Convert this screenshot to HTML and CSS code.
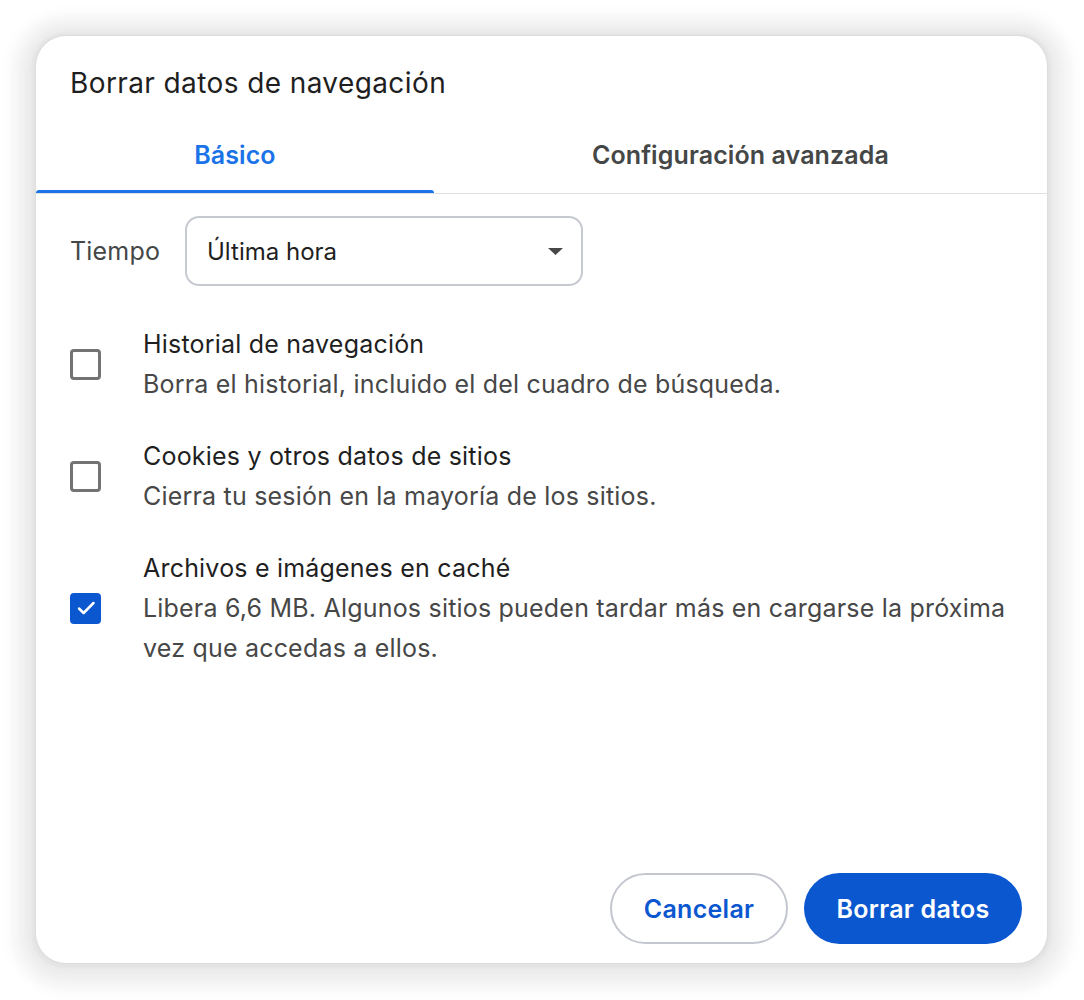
FILE: index.html
```html
<!DOCTYPE html>
<html lang="es">
<head>
<meta charset="utf-8">
<title>Borrar datos de navegación</title>
<link rel="stylesheet" href="styles.css">
</head>
<body>
<div class="dialog">
  <div class="title">Borrar datos de navegación</div>
  <div class="tabs">
    <div class="tab active"><span class="tab-label">Básico</span><span class="tab-bar"></span></div>
    <div class="tab"><span class="tab-label">Configuración avanzada</span><span class="tab-bar"></span></div>
  </div>
  <div class="content">
    <div class="time-row">
      <span class="time-label">Tiempo</span>
      <div class="select">
        <span class="select-value">Última hora</span>
        <svg class="select-arrow" width="15" height="7" viewBox="0 0 15 7"><path d="M0 0 H15 L7.5 7 Z" fill="#474747"/></svg>
      </div>
    </div>
    <div class="options">
      <div class="option">
        <span class="checkbox"></span>
        <div class="option-text">
          <div class="option-title">Historial de navegación</div>
          <div class="option-desc">Borra el historial, incluido el del cuadro de búsqueda.</div>
        </div>
      </div>
      <div class="option">
        <span class="checkbox"></span>
        <div class="option-text">
          <div class="option-title">Cookies y otros datos de sitios</div>
          <div class="option-desc">Cierra tu sesión en la mayoría de los sitios.</div>
        </div>
      </div>
      <div class="option">
        <span class="checkbox checked">
          <svg width="20" height="16" viewBox="0 0 20 16"><path d="M3 8.5 L7.6 13 L17.5 3" fill="none" stroke="#fff" stroke-width="2.5" stroke-linecap="round" stroke-linejoin="round"/></svg>
        </span>
        <div class="option-text">
          <div class="option-title">Archivos e imágenes en caché</div>
          <div class="option-desc">Libera 6,6 MB. Algunos sitios pueden tardar más en cargarse la próxima vez que accedas a ellos.</div>
        </div>
      </div>
    </div>
  </div>
  <div class="footer">
    <button class="btn btn-secondary">Cancelar</button>
    <button class="btn btn-primary">Borrar datos</button>
  </div>
</div>
</body>
</html>
```

FILE: styles.css
```css
html, body {
  margin: 0;
  padding: 0;
  background: #ffffff;
}

body {
  padding: 36px 0 37px 36px;
  font-family: "Inter", "Liberation Sans", sans-serif;
  color: #1f1f1f;
}

.dialog {
  box-sizing: border-box;
  width: 1011px;
  height: 927px;
  background: #ffffff;
  border-radius: 30px;
  display: flex;
  flex-direction: column;
  box-shadow:
    0 0 0 1px #dddddd,
    0 1px 3px 4px #e3e3e3,
    0 2px 8px 10px #ebebeb,
    0 3px 12px 18px #f2f2f2,
    0 3px 14px 26px #f8f8f8;
}

.title {
  padding: 31px 0 0 34px;
  font-size: 28px;
  line-height: 32px;
  letter-spacing: 0.4px;
  font-weight: 400;
  color: #1f1f1f;
}

.tabs {
  display: flex;
  margin-top: 20px;
  border-bottom: 1px solid #e0e0e0;
}

.tab {
  flex: 1 1 auto;
  display: flex;
  flex-direction: column;
  align-items: stretch;
}

.tab-label {
  text-align: center;
  font-size: 25px;
  line-height: 30px;
  letter-spacing: 0.1px;
  font-weight: 600;
  color: #444746;
  padding: 21px 0 20px;
}

.tab.active .tab-label {
  color: #1a73e8;
}

.tab-bar {
  height: 3px;
  border-radius: 3px 3px 0 0;
  background: transparent;
}

.tab.active .tab-bar {
  background: #1a73e8;
}

.content {
  flex: 1 1 auto;
  padding: 22px 34px 0 34px;
}

.time-row {
  display: flex;
  align-items: center;
}

.time-label {
  width: 115px;
  font-size: 25px;
  letter-spacing: 0.2px;
  color: #444746;
}

.select {
  box-sizing: border-box;
  width: 398px;
  height: 70px;
  border: 2px solid #c7c9d1;
  border-radius: 14px;
  display: flex;
  align-items: center;
  justify-content: space-between;
  padding: 0 18px 0 20px;
}

.select-value {
  font-size: 24px;
  color: #1f1f1f;
}

.options {
  display: flex;
  flex-direction: column;
  gap: 32px;
  padding-top: 38px;
}

.option {
  display: flex;
  align-items: center;
  gap: 42px;
}

.checkbox {
  box-sizing: border-box;
  flex: 0 0 31px;
  width: 31px;
  height: 31px;
  border: 3px solid #737373;
  border-radius: 4px;
  display: flex;
  align-items: center;
  justify-content: center;
}

.checkbox.checked {
  background: #0b57d0;
  border-color: #0b57d0;
}

.option-text {
  flex: 1 1 auto;
  font-size: 25px;
  letter-spacing: 0.2px;
  line-height: 40px;
}

.option-title {
  color: #1f1f1f;
}

.option-desc {
  color: #474747;
}

.footer {
  display: flex;
  justify-content: flex-end;
  gap: 16px;
  padding: 0 25px 19px 0;
}

.btn {
  box-sizing: border-box;
  height: 71px;
  border-radius: 36px;
  font-family: "Inter", "Liberation Sans", sans-serif;
  font-size: 25px;
  letter-spacing: 0.3px;
  font-weight: 600;
  cursor: pointer;
}

.btn-secondary {
  width: 178px;
  background: #ffffff;
  border: 2px solid #c4c7d0;
  color: #0b57d0;
}

.btn-primary {
  width: 218px;
  background: #0b57d0;
  border: none;
  color: #ffffff;
}
```
